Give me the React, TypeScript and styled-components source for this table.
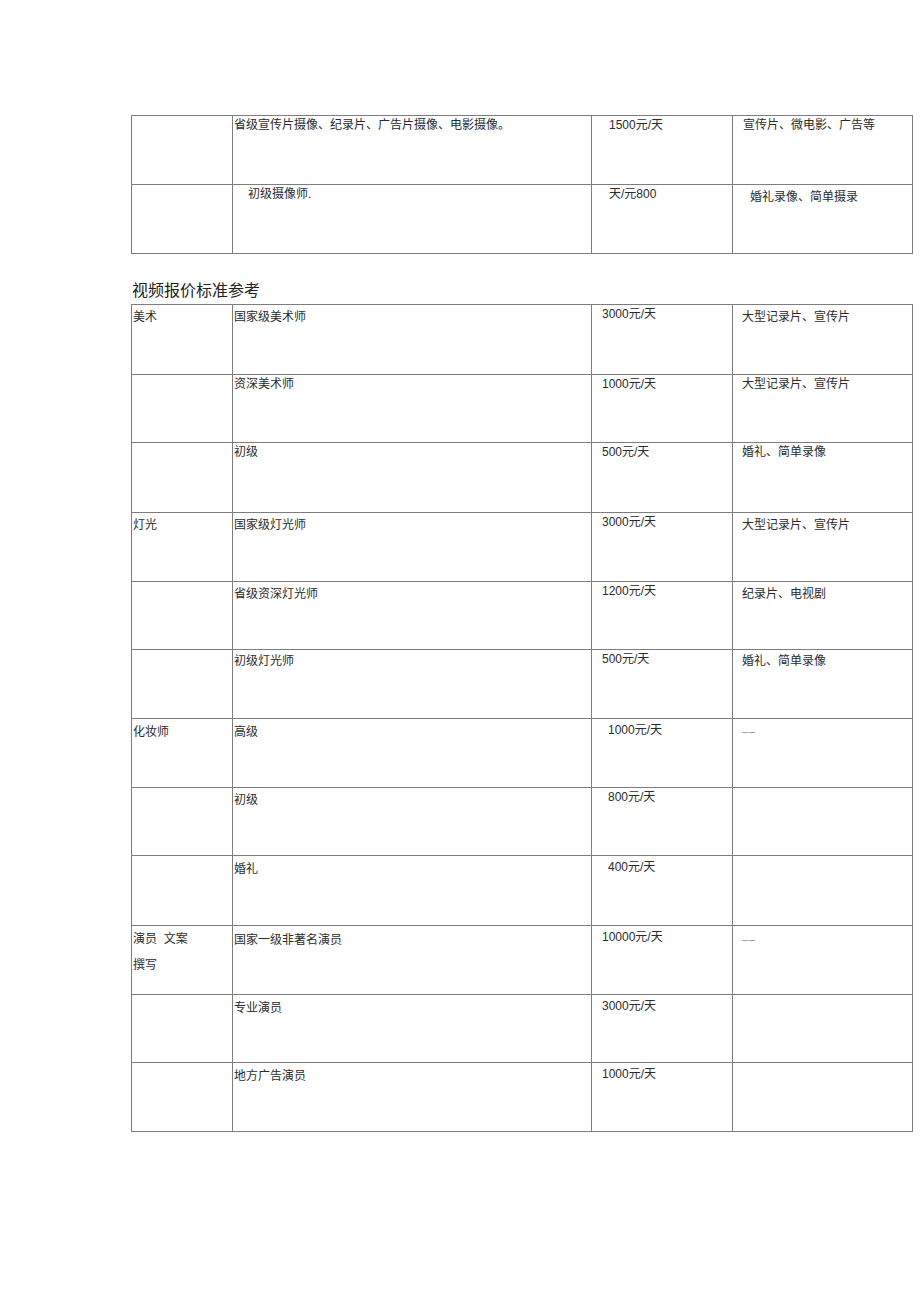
import styled, { createGlobalStyle } from 'styled-components';

type Cell = {
  text: string;
  indent?: number;
  top?: number;
  faint?: boolean;
};

type Row = {
  cells: Cell[];
  height?: number;
};

const GlobalStyle = createGlobalStyle`
  body {
    margin: 0;
    background: #fff;
    color: #262626;
    font-family: 'Liberation Sans', 'Noto Sans CJK SC', sans-serif;
  }
`;

const colWidths = [101, 359, 141, 180];

const topRows: Row[] = [
  {
    cells: [
      { text: '' },
      { text: '省级宣传片摄像、纪录片、广告片摄像、电影摄像。', indent: 1, top: 0 },
      { text: '1500元/天', indent: 17, top: 0 },
      { text: '宣传片、微电影、广告等', indent: 10, top: 0 },
    ],
  },
  {
    cells: [
      { text: '' },
      { text: '初级摄像师.', indent: 15, top: 0 },
      { text: '天/元800', indent: 17, top: 0 },
      { text: '婚礼录像、简单摄录', indent: 17, top: 3 },
    ],
  },
];

const priceRows: Row[] = [
  {
    height: 70,
    cells: [
      { text: '美术', indent: 1, top: 3 },
      { text: '国家级美术师', indent: 1, top: 3 },
      { text: '3000元/天', indent: 10, top: 0 },
      { text: '大型记录片、宣传片', indent: 9, top: 3 },
    ],
  },
  {
    height: 68,
    cells: [
      { text: '' },
      { text: '资深美术师', indent: 1, top: 0 },
      { text: '1000元/天', indent: 10, top: 0 },
      { text: '大型记录片、宣传片', indent: 9, top: 0 },
    ],
  },
  {
    height: 70,
    cells: [
      { text: '' },
      { text: '初级', indent: 1, top: 0 },
      { text: '500元/天', indent: 10, top: 0 },
      { text: '婚礼、简单录像', indent: 9, top: 0 },
    ],
  },
  {
    height: 69,
    cells: [
      { text: '灯光', indent: 1, top: 3 },
      { text: '国家级灯光师', indent: 1, top: 3 },
      { text: '3000元/天', indent: 10, top: 0 },
      { text: '大型记录片、宣传片', indent: 9, top: 3 },
    ],
  },
  {
    height: 68,
    cells: [
      { text: '' },
      { text: '省级资深灯光师', indent: 1, top: 3 },
      { text: '1200元/天', indent: 10, top: 0 },
      { text: '纪录片、电视剧', indent: 9, top: 3 },
    ],
  },
  {
    height: 69,
    cells: [
      { text: '' },
      { text: '初级灯光师', indent: 1, top: 2 },
      { text: '500元/天', indent: 10, top: 0 },
      { text: '婚礼、简单录像', indent: 9, top: 2 },
    ],
  },
  {
    height: 69,
    cells: [
      { text: '化妆师', indent: 1, top: 4 },
      { text: '高级', indent: 1, top: 4 },
      { text: '1000元/天', indent: 16, top: 2 },
      { text: '––', indent: 9, top: 3, faint: true },
    ],
  },
  {
    height: 68,
    cells: [
      { text: '' },
      { text: '初级', indent: 1, top: 3 },
      { text: '800元/天', indent: 16, top: 0 },
      { text: '' },
    ],
  },
  {
    height: 70,
    cells: [
      { text: '' },
      { text: '婚礼', indent: 1, top: 4 },
      { text: '400元/天', indent: 16, top: 2 },
      { text: '' },
    ],
  },
  {
    height: 69,
    cells: [
      { text: '演员  文案\n撰写', indent: 1, top: 0 },
      { text: '国家一级非著名演员', indent: 1, top: 5 },
      { text: '10000元/天', indent: 10, top: 2 },
      { text: '––', indent: 9, top: 4, faint: true },
    ],
  },
  {
    height: 68,
    cells: [
      { text: '' },
      { text: '专业演员', indent: 1, top: 4 },
      { text: '3000元/天', indent: 10, top: 2 },
      { text: '' },
    ],
  },
  {
    height: 69,
    cells: [
      { text: '' },
      { text: '地方广告演员', indent: 1, top: 4 },
      { text: '1000元/天', indent: 10, top: 2 },
      { text: '' },
    ],
  },
];

const PriceTable = ({ rows }: { rows: Row[] }): React.ReactElement => (
  <Table>
    <colgroup>
      {colWidths.map((w, i) => (
        <col key={i} style={{ width: w }} />
      ))}
    </colgroup>
    <tbody>
      {rows.map((row, i) => (
        <Tr key={i} $height={row.height ?? 69}>
          {row.cells.map((cell, j) => (
            <Td
              key={j}
              $indent={cell.indent ?? 0}
              $top={cell.top ?? 0}
              $multi={cell.text.includes('\n')}
              $faint={!!cell.faint}
            >
              {cell.text}
            </Td>
          ))}
        </Tr>
      ))}
    </tbody>
  </Table>
);

export const App = (): React.ReactElement => {
  return (
    <>
      <GlobalStyle />
      <Page>
        <PriceTable rows={topRows} />
        <Title>视频报价标准参考</Title>
        <PriceTable rows={priceRows} />
      </Page>
    </>
  );
};

const Page = styled.div`
  width: 782px;
  padding: 115px 0 160px 131px;
`;

const Title = styled.h2`
  margin: 25px 0 5px 1px;
  font-family: 'Noto Sans CJK SC', sans-serif;
  font-size: 16px;
  font-weight: 400;
  line-height: 20px;
  color: #222;
`;

const Table = styled.table`
  width: 781px;
  table-layout: fixed;
  border-collapse: collapse;
`;

const Tr = styled.tr<{ $height: number }>`
  height: ${(p) => p.$height}px;
`;

const Td = styled.td<{ $indent: number; $top: number; $multi: boolean; $faint: boolean }>`
  border: 1px solid #7d7d7d;
  vertical-align: top;
  padding: ${(p) => p.$top}px 2px 0 ${(p) => p.$indent}px;
  font-family: ${(p) => (p.$faint ? "'Liberation Sans', sans-serif" : 'inherit')};
  font-size: ${(p) => (p.$faint ? '11px' : '12px')};
  line-height: ${(p) => (p.$multi ? '26px' : '18px')};
  letter-spacing: ${(p) => (p.$faint ? '1px' : 'normal')};
  white-space: pre-wrap;
  color: ${(p) => (p.$faint ? '#8a8a8a' : '#2b2b2b')};
`;

export default App;
